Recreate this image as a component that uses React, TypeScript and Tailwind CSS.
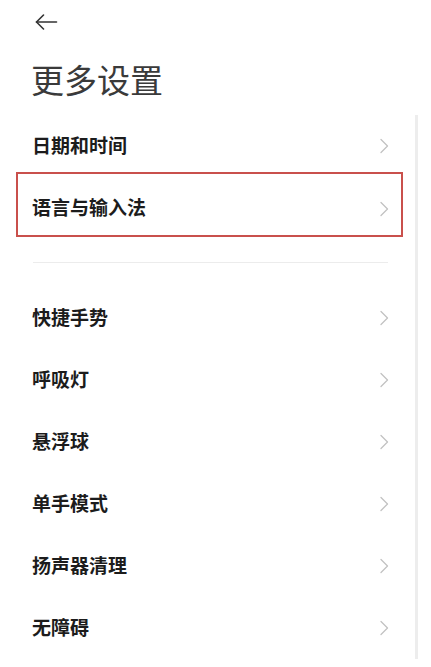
import React from 'react';

const BackArrow = () => (
  <svg width="23" height="16" viewBox="0 0 23 16" fill="none" stroke="#333" strokeWidth="1.6" strokeLinecap="round" strokeLinejoin="round">
    <path d="M1.5 8h20" />
    <path d="M8.5 1L1.5 8l7 7" />
  </svg>
);

const Chevron = () => (
  <svg width="10" height="16" viewBox="0 0 10 16" fill="none" stroke="#c2c2c2" strokeWidth="1.3" strokeLinecap="round" strokeLinejoin="round">
    <path d="M2 1.5L8.5 8 2 14.5" />
  </svg>
);

const Row = ({ label, className = 'h-[62px]', children }: { label: string; className?: string; children?: React.ReactNode }) => (
  <div className={`relative flex items-center justify-between pl-[32px] pr-[26px] ${className}`}>
    <span className="text-[19px] leading-none font-bold text-[#1c1c1c] -translate-y-[2px]">{label}</span>
    <Chevron />
    {children}
  </div>
);

export default function App() {
  const lower = ['快捷手势', '呼吸灯', '悬浮球', '单手模式', '扬声器清理', '无障碍'];

  return (
    <div
      className="w-[431px] h-[667px] bg-white overflow-hidden"
      style={{ fontFamily: '"Noto Sans CJK SC", "Noto Sans", sans-serif' }}
    >
      {/* top bar */}
      <div className="h-[44px] flex items-center pl-[35px]">
        <BackArrow />
      </div>
      <h1 className="mt-[17px] h-[36px] pl-[31px] text-[33px] leading-[36px] font-normal text-[#3a3a3a]">更多设置</h1>

      {/* list */}
      <div className="mt-[18px] w-[418px] border-r-[3px] border-[#ededed]">
        <Row label="日期和时间" />
        <Row label="语言与输入法" className="h-[63px]">
          <div className="absolute left-[16px] right-[12px] top-[-5px] bottom-[3px] border-2 border-[#c9504c] pointer-events-none" />
        </Row>
        <div className="pt-[22px] pb-[24px] pl-[33px] pr-[27px]">
          <div className="h-px bg-[#ececec]" />
        </div>
        {lower.map((l) => (
          <Row key={l} label={l} />
        ))}
      </div>
    </div>
  );
}
